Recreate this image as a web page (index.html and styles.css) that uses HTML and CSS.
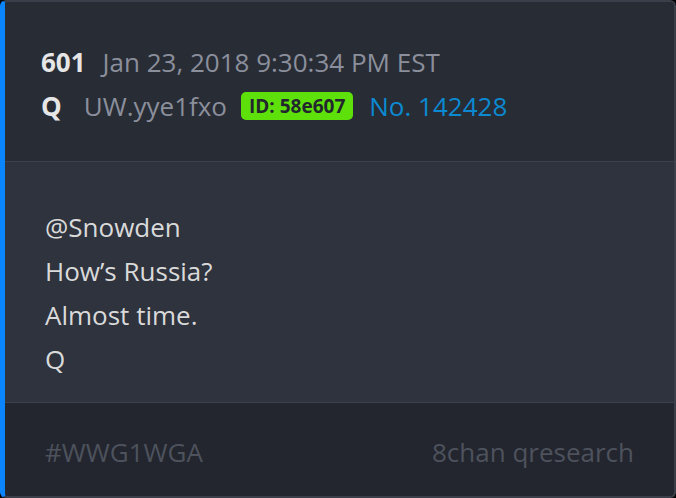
FILE: index.html
```html
<!DOCTYPE html>
<html lang="en">
<head>
  <meta charset="UTF-8">
  <title>Q Post 601</title>
  <link rel="stylesheet" href="styles.css">
</head>
<body>

<div class="post">

  <!-- Header -->
  <div class="post-header">
    <div class="meta-line">
      <span class="post-num">601</span>
      <span class="post-date">Jan 23, 2018 9:30:34 PM EST</span>
    </div>
    <div class="meta-line">
      <span class="author">Q</span>
      <span class="trip">UW.yye1fxo</span>
      <span class="badge">ID: 58e607</span>
      <span class="post-link">No. 142428</span>
    </div>
  </div>

  <!-- Body -->
  <div class="post-body">
    <p>@Snowden</p>
    <p>How’s Russia?</p>
    <p>Almost time.</p>
    <p>Q</p>
  </div>

  <!-- Footer -->
  <div class="post-footer">
    <span>#WWG1WGA</span>
    <span>8chan qresearch</span>
  </div>

</div>

</body>
</html>
```

FILE: styles.css
```css
body {
  margin: 0;
  background-color: #000;
  font-family: "Open Sans", "Noto Sans", sans-serif;
}

.post {
  height: 498px;
  box-sizing: border-box;
  display: flex;
  flex-direction: column;
  border: 2px solid #3a3f4a;
  border-left: 5px solid #0a84ff;
  border-radius: 6px;
  overflow: hidden;
  background-color: #23262e;
}

.post-header {
  background-color: #282c35;
  padding: 38px 40px 33px 36px;
  border-bottom: 1px solid #3c414c;
}

.meta-line {
  display: flex;
  align-items: center;
  height: 44px;
  font-size: 26px;
}

.post-num {
  color: #e6e6e6;
  font-weight: 700;
  margin-right: 17px;
}

.author {
  color: #e6e6e6;
  font-weight: 700;
  margin-right: 22px;
}

.post-date,
.trip {
  color: #8b8f9c;
}

.trip {
  margin-right: 14px;
}

.badge {
  background-color: #5ee10b;
  color: #22262d;
  font-size: 19px;
  font-weight: 700;
  line-height: 28px;
  padding: 0 8px;
  border-radius: 5px;
  margin-right: 16px;
}

.post-link {
  color: #0b8ad2;
}

.post-body {
  flex: 1;
  background-color: #2e333d;
  padding: 43px 40px 19px 40px;
  border-bottom: 1px solid #3c414c;
}

.post-body p {
  margin: 0;
  color: #dadada;
  font-size: 26px;
  line-height: 44px;
}

.post-footer {
  display: flex;
  justify-content: space-between;
  padding: 27px 40px 22px 40px;
  height: 93px;
  box-sizing: border-box;
  color: #4d525d;
  font-size: 26px;
  line-height: 44px;
}
```
